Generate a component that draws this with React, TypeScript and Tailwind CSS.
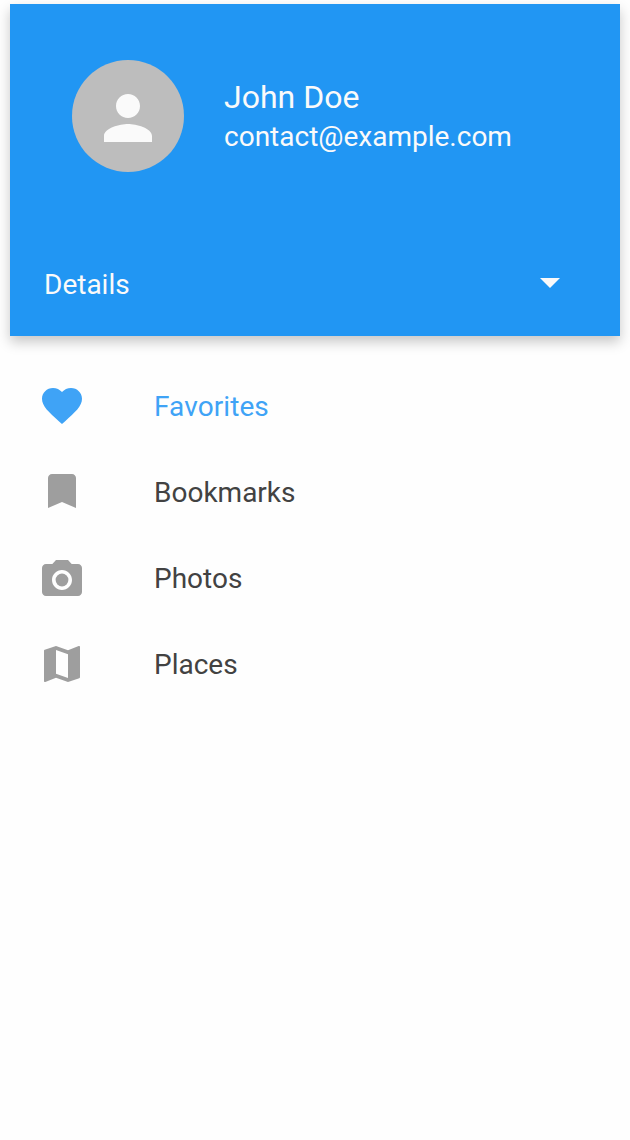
import { MdPerson, MdArrowDropDown, MdPhotoCamera, MdMap } from "react-icons/md";

function Heart({ className }: { className?: string }) {
  return (
    <svg viewBox="0 0 24 24" fill="currentColor" className={className}>
      <path d="M12 21l-1.45-1.3C5.4 15.1 2 12.1 2 8.4 2 5.4 4.42 3 7.5 3c1.74 0 3.41.8 4.5 2.05C13.09 3.8 14.76 3 16.5 3 19.58 3 22 5.4 22 8.4c0 3.7-3.4 6.7-8.55 11.3L12 21z" />
    </svg>
  );
}

function Bookmark({ className }: { className?: string }) {
  return (
    <svg viewBox="0 0 24 24" fill="currentColor" className={className}>
      <path d="M17 3H7c-1.1 0-2 .9-2 2v15l7-3 7 3V5c0-1.1-.9-2-2-2z" />
    </svg>
  );
}

const items = [
  { label: "Favorites", Icon: Heart, box: "size-12 text-[#3fa3f6]", row: "tracking-[0.08px] text-[#3fa3f6]" },
  { label: "Bookmarks", Icon: Bookmark, box: "size-12 text-[#9e9e9e]", row: "text-[#424242]" },
  { label: "Photos", Icon: MdPhotoCamera, box: "mt-1 size-12 text-[#9e9e9e]", row: "text-[#424242]" },
  { label: "Places", Icon: MdMap, box: "size-12 text-[#9e9e9e]", row: "text-[#424242]" },
];

export default function App() {
  return (
    <div className="h-[1140px] w-[630px] overflow-hidden bg-[#fefefe] px-[10px] pt-1 font-['Roboto',sans-serif] text-[28px] leading-8">
      <header className="flex h-[332px] flex-col justify-between bg-[#2196f3] text-[#fafafa] shadow-[0_6px_12px_rgba(0,0,0,0.22)]">
        <div className="flex items-center pt-14 pl-[62px]">
          <div className="flex size-28 items-center justify-center rounded-full bg-[#bdbdbd] pt-1">
            <MdPerson className="size-[72px]" />
          </div>
          <div className="ml-10 pt-[3px]">
            <div className="text-[32px] leading-[38px]">John Doe</div>
            <div className="leading-[41px]">contact@example.com</div>
          </div>
        </div>
        <button className="flex h-[104px] items-center justify-between pr-[46px] pl-[34px] text-left">
          <span className="pt-0.5">Details</span>
          <MdArrowDropDown className="mb-1 size-12" />
        </button>
      </header>
      <nav className="pt-[27px]">
        {items.map(({ label, Icon, box, row }) => (
          <a key={label} className={`flex h-[86px] items-center pl-7 ${row}`}>
            <Icon className={box} />
            <span className="ml-[68px] pt-0.5">{label}</span>
          </a>
        ))}
      </nav>
    </div>
  );
}
